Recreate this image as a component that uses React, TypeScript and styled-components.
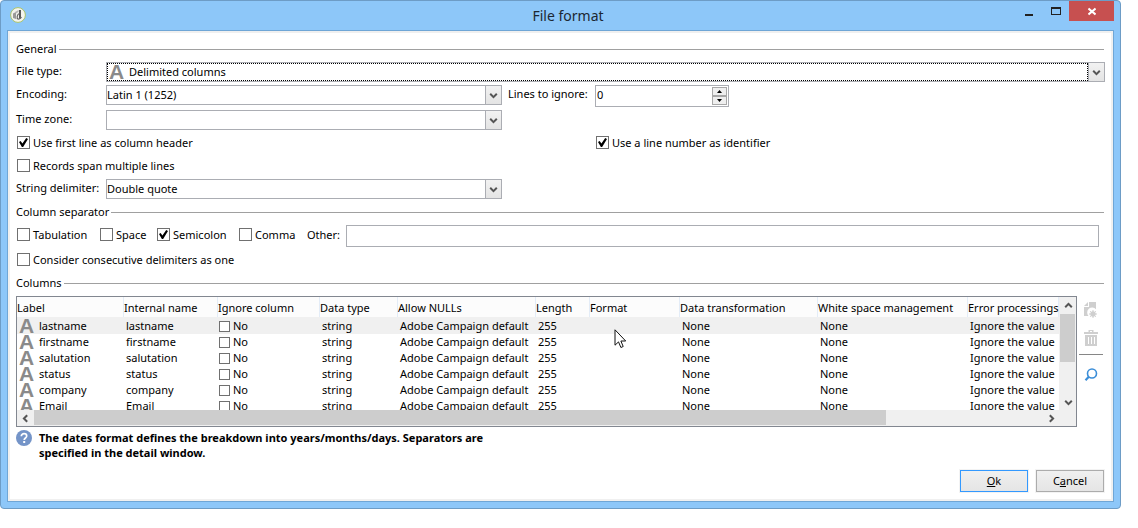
import React from "react";
import styled, { createGlobalStyle, css } from "styled-components";

const GlobalStyle = createGlobalStyle`
  *, *::before, *::after { box-sizing: border-box; }
  body {
    margin: 0;
    background: #fff;
    color: #000;
    font: 11px/16px "Noto Sans", "Open Sans", sans-serif;
  }
  button, input, select { font: inherit; color: inherit; margin: 0; }
`;

const Dialog = styled.main`
  position: relative;
  margin: 0 17px 19px 0;
  padding: 0 6px 6px;
  min-width: 760px;
  background: #8dc7f9;
  border: 1px solid #6d9cc6;
  border-radius: 4px;
`;

const TitleBar = styled.header`
  display: grid;
  grid-template-columns: 1fr auto 1fr;
  align-items: start;
  height: 29px;
`;

const AppIcon = styled.svg`
  margin: 6px 3px;
`;

const Title = styled.h1`
  margin: 0;
  padding-left: 15px;
  font-size: 14px;
  line-height: 29px;
  font-weight: 400;
  color: #1c2733;
`;

const WindowButtons = styled.div`
  display: flex;
  justify-content: flex-end;
`;

const WindowButton = styled.button<{ $close?: boolean }>`
  width: ${(p) => (p.$close ? 45 : 27)}px;
  height: 20px;
  padding: 0;
  border: 0;
  display: grid;
  place-items: center;
  background: ${(p) => (p.$close ? "#c75050" : "transparent")};
`;

const Client = styled.form`
  background: #fff;
  border: 1px solid #6fa6d6;
  box-shadow: inset 0 0 0 2px #f0f0f0;
  padding: 9px 8px;
`;

const SectionTitle = styled.h2`
  display: flex;
  align-items: center;
  gap: 2px;
  margin: 0 1px 4px 0;
  height: 18px;
  font-size: 11px;
  font-weight: 400;
  line-height: 18px;

  &::after {
    content: "";
    flex: 1;
    height: 1px;
    background: #a0a0a0;
  }
`;

const Row = styled.div<{ $gap?: number }>`
  display: flex;
  align-items: flex-start;
  margin-bottom: ${(p) => p.$gap ?? 3}px;
`;

const FieldLabel = styled.label<{ $width?: number }>`
  flex: none;
  width: ${(p) => p.$width ?? 90}px;
  line-height: 18px;
  white-space: nowrap;
`;

const LinesLabel = styled(FieldLabel)`
  margin-left: 6px;
`;

const Combo = styled.div<{ $wide?: boolean }>`
  position: relative;
  display: grid;
  flex: ${(p) => (p.$wide ? "1" : "0 0 396px")};
  height: 20px;
  border: 1px solid #abadb3;
`;

const Select = styled.select<{ $focused?: boolean }>`
  grid-area: 1 / 1;
  appearance: none;
  width: calc(100% - 16px);
  height: 18px;
  padding: 0;
  border: 0;
  border-radius: 0;
  background: #fff;
  line-height: 16px;
  outline: none;
  ${(p) =>
    p.$focused &&
    css`
      border: 1px dotted #000;
      padding-left: 21px;
    `}
`;

const ComboArrow = styled.span`
  grid-area: 1 / 1;
  justify-self: end;
  display: grid;
  place-items: center;
  width: 16px;
  height: 18px;
  border-left: 1px solid #abadb3;
  background: linear-gradient(#f2f2f2, #e4e4e4);
  pointer-events: none;
`;

const TypeGlyph = styled.span`
  display: block;
  flex: none;
  width: 15px;
  height: 16px;
  color: #8a8a8a;
  font: bold 21px/16px "Liberation Sans", sans-serif;
`;

const ComboGlyph = styled.span`
  position: absolute;
  left: 2px;
  top: 1px;
  pointer-events: none;
`;

const Spinner = styled.div`
  display: flex;
  width: 134px;
  height: 22px;
  padding: 1px;
  border: 1px solid #abadb3;
`;

const SpinnerInput = styled.input`
  flex: 1;
  min-width: 0;
  height: 16px;
  padding: 0;
  border: 0;
  outline: none;
  appearance: textfield;
  &::-webkit-inner-spin-button { appearance: none; }
`;

const SpinnerButtons = styled.div`
  display: flex;
  flex-direction: column;
`;

const StepButton = styled.button`
  display: grid;
  place-items: center;
  width: 15px;
  height: 9px;
  padding: 0;
  border: 1px solid #a8a8a8;
  background: #efefef;
`;

const CheckLabel = styled.label<{ $width?: number }>`
  display: flex;
  align-items: center;
  gap: 3px;
  flex: none;
  width: ${(p) => (p.$width ? `${p.$width}px` : "auto")};
  height: 17px;
  padding-left: 1px;
  white-space: nowrap;
`;

const CheckBox = styled.input<{ $small?: boolean }>`
  appearance: none;
  flex: none;
  display: grid;
  place-items: center;
  width: ${(p) => (p.$small ? 11 : 13)}px;
  height: ${(p) => (p.$small ? 11 : 13)}px;
  margin: 0;
  border: 1px solid #707070;
  background: #fff;

  &:checked::before {
    content: "";
    width: 9px;
    height: 9px;
    background: #000;
    clip-path: polygon(0 45%, 18% 34%, 38% 62%, 80% 0, 100% 12%, 46% 100%, 32% 100%);
  }
`;

const Separators = styled(Row)`
  margin-right: 6px;
  ${CheckLabel}, ${FieldLabel} { height: 19px; line-height: 19px; }
`;

const TextInput = styled.input`
  flex: 1;
  min-width: 0;
  height: 22px;
  padding: 0 2px;
  border: 1px solid #abadb3;
  outline: none;
`;

const ColumnsArea = styled.div`
  display: flex;
`;

const Grid = styled.div`
  flex: 1;
  min-width: 0;
  display: grid;
  grid-template-columns: minmax(0, 1fr) 17px;
  grid-template-rows: 113px 16px;
  border: 1px solid #828790;
  background: #f0f0f0;
`;

const Viewport = styled.div`
  overflow: hidden;
  background: #fff;
`;

const Table = styled.table`
  table-layout: fixed;
  width: 1042px;
  border-collapse: separate;
  border-spacing: 0;
`;

const Th = styled.th<{ $width: number }>`
  width: ${(p) => p.$width}px;
  height: 20px;
  padding: 1px 0 0;
  border-right: 1px solid #e3ecf7;
  background: #fcfcfc;
  font-weight: 400;
  text-align: left;
  white-space: nowrap;
`;

const Tr = styled.tr<{ $selected?: boolean }>`
  ${(p) =>
    p.$selected &&
    css`
      background: #f0f0f0;
      td { padding-top: 1px; }
    `}
`;

const Td = styled.td<{ $inset?: number }>`
  padding: 0 0 0 ${(p) => p.$inset ?? 2}px;
  line-height: 16px;
  white-space: nowrap;
`;

const CellFlow = styled.div<{ $gap: number }>`
  display: flex;
  align-items: center;
  gap: ${(p) => p.$gap}px;
  height: 16px;
`;

const ScrollBar = styled.div<{ $vertical?: boolean }>`
  display: flex;
  ${(p) =>
    p.$vertical
      ? "flex-direction: column; padding-left: 1px;"
      : "grid-column: 1 / 3; padding-right: 17px;"}
`;

const ScrollButton = styled.button`
  flex: none;
  display: grid;
  place-items: center;
  width: 16px;
  height: 16px;
  padding: 0;
  border: 0;
  background: transparent;
`;

const Track = styled.div<{ $vertical?: boolean }>`
  flex: 1;
  margin: ${(p) => (p.$vertical ? "1px 1px 1px 0" : "0 0 1px 1px")};
`;

const Thumb = styled.div<{ $vertical?: boolean }>`
  background: #cdcdcd;
  ${(p) => (p.$vertical ? "height: 48px; width: 15px;" : "width: calc(85% - 6px); height: 15px;")}
`;

const SideTools = styled.div`
  display: flex;
  flex-direction: column;
  align-items: center;
  width: 28px;
  padding: 6px 1px 0 1px;
`;

const ToolButton = styled.button`
  display: grid;
  place-items: center;
  width: 16px;
  height: 16px;
  padding: 0;
  border: 0;
  background: none;
  margin-bottom: 12px;
`;

const ToolRule = styled.hr`
  width: 24px;
  height: 1px;
  margin: -4px 0 12px;
  border: 0;
  background: #868686;
`;

const Help = styled.div`
  display: flex;
  align-items: flex-start;
  gap: 7px;
  margin-top: 3px;
`;

const HelpText = styled.p`
  margin: 0;
  width: 460px;
  font-weight: 700;
  line-height: 15px;
`;

const Actions = styled.div`
  display: flex;
  justify-content: flex-end;
  gap: 8px;
  margin: 10px 1px 0 0;
`;

const ActionButton = styled.button<{ $default?: boolean }>`
  width: 68px;
  height: 22px;
  padding: 0;
  border: 1px solid ${(p) => (p.$default ? "#3399ff" : "#acacac")};
  background: linear-gradient(#f0f0f0, #e5e5e5);
  box-shadow: 0 0 0 1px #f3f3f3;
`;

const Pointer = styled.svg`
  position: absolute;
  left: 613px;
  top: 328px;
`;

const Chevron = ({ dir = "down" }: { dir?: "up" | "down" | "left" | "right" }) => {
  const turn = { down: 0, up: 180, left: 90, right: 270 }[dir];
  return (
    <svg width="9" height="9" viewBox="0 0 9 9" aria-hidden="true">
      <path d="M1.2 2.8 4.5 6.1 7.8 2.8" fill="none" stroke="#555" strokeWidth="2" transform={`rotate(${turn} 4.5 4.5)`} />
    </svg>
  );
};

type FieldProps = { id: string; label: string; value: string; wide?: boolean; glyph?: boolean };

const ComboField = ({ id, label, value, wide, glyph }: FieldProps) => (
  <>
    <FieldLabel htmlFor={id}>{label}</FieldLabel>
    <Combo $wide={wide}>
      <Select id={id} $focused={glyph} defaultValue={value}>
        <option>{value}</option>
      </Select>
      <ComboArrow><Chevron /></ComboArrow>
      {glyph && <ComboGlyph aria-hidden="true"><TypeGlyph>A</TypeGlyph></ComboGlyph>}
    </Combo>
  </>
);

const Check = ({ label, checked, width }: { label: string; checked?: boolean; width?: number }) => (
  <CheckLabel $width={width}>
    <CheckBox type="checkbox" defaultChecked={checked} />
    {label}
  </CheckLabel>
);

const columns: [string, number][] = [
  ["Label", 107],
  ["Internal name", 94],
  ["Ignore column", 102],
  ["Data type", 78],
  ["Allow NULLs", 138],
  ["Length", 54],
  ["Format", 90],
  ["Data transformation", 138],
  ["White space management", 150],
  ["Error processings", 91],
];

const names = ["lastname", "firstname", "salutation", "status", "company", "Email"];

export default function App() {
  return (
    <>
      <GlobalStyle />
      <Dialog>
        <TitleBar>
          <AppIcon width="16" height="16" viewBox="0 0 16 16" aria-hidden="true">
            <circle cx="8" cy="8" r="7.4" fill="#f4f4ee" stroke="#a9c36a" />
            <path d="M3 6.5 6 5v7l-3-1z" fill="#999" />
            <path d="M5 5 8.500 3v2L6 6.500z" fill="#b5b5b5" />
            <path d="M10 3v8.500" stroke="#333" strokeWidth="1.6" />
            <path d="M9.500 6.500C7 7 6.500 11.500 8 12c1.500.3 2.800-.8 3.500-1.800" fill="none" stroke="#666" strokeWidth="1.200" />
          </AppIcon>
          <Title>File format</Title>
          <WindowButtons>
            <WindowButton type="button" aria-label="Minimize">
              <svg width="11" height="20"><path d="M2 13h8v2H2z" fill="#222" /></svg>
            </WindowButton>
            <WindowButton type="button" aria-label="Maximize">
              <svg width="10" height="20"><path d="M0 6h10v8H0zM1 8v5h8V8z" fill="#222" fillRule="evenodd" /></svg>
            </WindowButton>
            <WindowButton type="button" aria-label="Close" $close>
              <svg width="8" height="20"><path d="M.5 7.500 7.500 13.500M7.500 7.500 .5 13.500" stroke="#fff" strokeWidth="2" /></svg>
            </WindowButton>
          </WindowButtons>
        </TitleBar>

        <Client>
          <SectionTitle>General</SectionTitle>
          <Row><ComboField id="type" label="File type:" value="Delimited columns" wide glyph /></Row>
          <Row>
            <ComboField id="enc" label="Encoding:" value="Latin 1 (1252)" />
            <LinesLabel htmlFor="lines" $width={87}>Lines to ignore:</LinesLabel>
            <Spinner>
              <SpinnerInput id="lines" type="number" defaultValue={0} />
              <SpinnerButtons>
                <StepButton type="button" aria-label="Increase">
                  <svg width="5" height="3"><path d="M0 3 2.500 0 5 3z" /></svg>
                </StepButton>
                <StepButton type="button" aria-label="Decrease">
                  <svg width="5" height="3"><path d="M0 0 2.500 3 5 0z" /></svg>
                </StepButton>
              </SpinnerButtons>
            </Spinner>
          </Row>
          <Row $gap={4}><ComboField id="zone" label="Time zone:" value="" /></Row>
          <Row $gap={6}>
            <Check label="Use first line as column header" checked width={579} />
            <Check label="Use a line number as identifier" checked />
          </Row>
          <Row $gap={5}><Check label="Records span multiple lines" /></Row>
          <Row $gap={4}><ComboField id="delim" label="String delimiter:" value="Double quote" /></Row>

          <SectionTitle>Column separator</SectionTitle>
          <Separators $gap={4}>
            <Check label="Tabulation" width={83} />
            <Check label="Space" width={57} />
            <Check label="Semicolon" checked width={82} />
            <Check label="Comma" width={69} />
            <FieldLabel htmlFor="other" $width={39}>Other:</FieldLabel>
            <TextInput id="other" />
          </Separators>
          <Row $gap={6}><Check label="Consider consecutive delimiters as one" /></Row>

          <SectionTitle>Columns</SectionTitle>
          <ColumnsArea>
            <Grid>
              <Viewport>
                <Table>
                  <thead>
                    <tr>{columns.map(([name, width]) => <Th key={name} $width={width}>{name}</Th>)}</tr>
                  </thead>
                  <tbody>
                    {names.map((name, i) => (
                      <Tr key={name} $selected={i === 0}>
                        <Td><CellFlow $gap={5}><TypeGlyph aria-hidden="true">A</TypeGlyph>{name}</CellFlow></Td>
                        <Td>{name}</Td>
                        <Td $inset={1}>
                          <CellFlow as="label" $gap={3}><CheckBox type="checkbox" $small />No</CellFlow>
                        </Td>
                        <Td>string</Td>
                        <Td>Adobe Campaign default</Td>
                        <Td>255</Td>
                        <Td />
                        <Td>None</Td>
                        <Td>None</Td>
                        <Td>Ignore the value</Td>
                      </Tr>
                    ))}
                  </tbody>
                </Table>
              </Viewport>
              <ScrollBar $vertical>
                <ScrollButton type="button" aria-label="Scroll up"><Chevron dir="up" /></ScrollButton>
                <Track $vertical><Thumb $vertical /></Track>
                <ScrollButton type="button" aria-label="Scroll down"><Chevron /></ScrollButton>
              </ScrollBar>
              <ScrollBar>
                <ScrollButton type="button" aria-label="Scroll left"><Chevron dir="left" /></ScrollButton>
                <Track><Thumb /></Track>
                <ScrollButton type="button" aria-label="Scroll right"><Chevron dir="right" /></ScrollButton>
              </ScrollBar>
            </Grid>
            <SideTools>
              <ToolButton type="button" aria-label="Add">
                <svg width="14" height="16" viewBox="0 0 14 16">
                  <path d="M5 0h7v7.200A4.500 4.500 0 0 0 4.500 14H0V5h5z" fill="#cfcfcf" />
                  <path d="M4 0v4H0z" fill="#cfcfcf" />
                  <circle cx="9" cy="12" r="2.700" fill="#cfcfcf" />
                  <path d="M9 8v8M5 12h8M6.200 9.200l5.600 5.600M11.800 9.200l-5.600 5.600" stroke="#cfcfcf" />
                </svg>
              </ToolButton>
              <ToolButton type="button" aria-label="Delete">
                <svg width="14" height="16" viewBox="0 0 14 16">
                  <path d="M0 2h4.500V0h5v2H14v2H0zM6 1v1h2V1z" fill="#cfcfcf" fillRule="evenodd" />
                  <path d="M1 5h12v11H1zM4 7v7h1V7zM7 7v7h1V7zM10 7v7h1V7z" fill="#cfcfcf" fillRule="evenodd" />
                </svg>
              </ToolButton>
              <ToolRule />
              <ToolButton type="button" aria-label="Search">
                <svg width="14" height="14" viewBox="0 0 14 14" fill="none" stroke="#3b8ed8">
                  <circle cx="8" cy="5.500" r="4.500" strokeWidth="1.600" />
                  <path d="M4.800 8.800 1.500 12.300" strokeWidth="2.200" />
                </svg>
              </ToolButton>
            </SideTools>
          </ColumnsArea>

          <Help>
            <svg width="16" height="16" viewBox="0 0 16 16" aria-hidden="true">
              <circle cx="8" cy="8" r="8" fill="#7494c8" />
              <path d="M5.300 6.200C5.300 2.800 10.700 3 10.700 6c0 2-2.500 2-2.500 4" fill="none" stroke="#fff" strokeWidth="1.700" />
              <path d="M7.200 11h2v2h-2z" fill="#fff" />
            </svg>
            <HelpText>
              The dates format defines the breakdown into years/months/days. Separators are specified in the detail window.
            </HelpText>
          </Help>
          <Actions>
            <ActionButton type="button" $default><u>O</u>k</ActionButton>
            <ActionButton type="button">C<u>a</u>ncel</ActionButton>
          </Actions>
        </Client>

        <Pointer width="13" height="20" viewBox="0 0 13 20" aria-hidden="true">
          <path d="M1 .8v15.400l3.500-3.300 2.400 5.600 2.300-1-2.300-5.500h4.800z" fill="#fff" stroke="#111" />
        </Pointer>
      </Dialog>
    </>
  );
}
